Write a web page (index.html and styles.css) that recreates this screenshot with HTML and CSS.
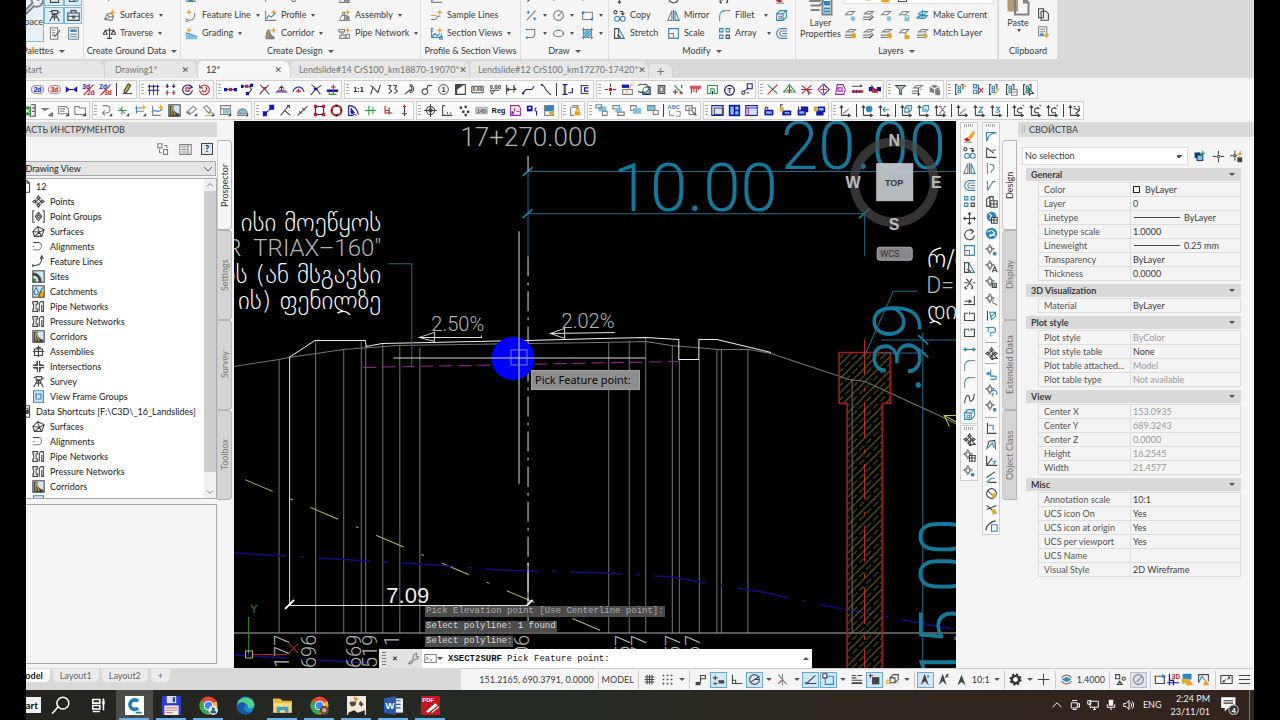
FILE: index.html
```html
<!DOCTYPE html>
<html lang="en">
<head>
<meta charset="utf-8">
<title>Civil 3D</title>
<link rel="stylesheet" href="styles.css">
</head>
<body>
<div class="screen">
<div class="app">

<header class="ribbon">
  <section class="panel palettes">
    <div class="body">
      <button class="big on"><i data-icon="wrench"></i>Toolspace</button>
      <button class="on" aria-label="Sheet"><i data-icon="sheet"></i></button><button class="on" aria-label="Settings"><i data-icon="gearb"></i></button>
      <button class="on" aria-label="Survey"><i data-icon="survey"></i></button><button class="on" aria-label="Toolbox"><i data-icon="case"></i></button>
      <button aria-label="Edit list"><i data-icon="listpen"></i></button><button aria-label="Properties"><i data-icon="bluelist"></i></button>
    </div>
    <h2>Palettes <b class="caret"></b></h2>
  </section>
  <section class="panel ground">
    <div class="body">
      <button><i data-icon="ptstar"></i>Points <b class="caret"></b></button>
      <button><i data-icon="surfstar"></i>Surfaces <b class="caret"></b></button>
      <button><i data-icon="scales"></i>Traverse <b class="caret"></b></button>
    </div>
    <h2>Create Ground Data <b class="caret"></b></h2>
  </section>
  <section class="panel design">
    <div class="body">
      <button><i data-icon="parcel"></i>Parcel <b class="caret"></b></button>
      <button><i data-icon="align"></i>Alignment <b class="caret"></b></button>
      <button><i data-icon="assem"></i>Intersections <b class="caret"></b></button>
      <button><i data-icon="featstar"></i>Feature Line <b class="caret"></b></button>
      <button><i data-icon="profile"></i>Profile <b class="caret"></b></button>
      <button><i data-icon="assem"></i>Assembly <b class="caret"></b></button>
      <button><i data-icon="grading"></i>Grading <b class="caret"></b></button>
      <button><i data-icon="corrstar"></i>Corridor <b class="caret"></b></button>
      <button><i data-icon="pipestar"></i>Pipe Network <b class="caret"></b></button>
    </div>
    <h2>Create Design <b class="caret"></b></h2>
  </section>
  <section class="panel views">
    <div class="body">
      <button><i data-icon="profile"></i>Profile View <b class="caret"></b></button>
      <button><i data-icon="sample"></i>Sample Lines</button>
      <button><i data-icon="section"></i>Section Views <b class="caret"></b></button>
    </div>
    <h2>Profile &amp; Section Views</h2>
  </section>
  <section class="panel draw">
    <div class="body">
      <button><i data-icon="seg"></i><b class="caret"></b></button><button><i data-icon="arc"></i><b class="caret"></b></button><button><i data-icon="arc"></i><b class="caret"></b></button>
      <button><i data-icon="pctline"></i><b class="caret"></b></button><button><i data-icon="circ"></i><b class="caret"></b></button><button><i data-icon="rect"></i><b class="caret"></b></button>
      <button><i data-icon="pline"></i><b class="caret"></b></button><button><i data-icon="ell"></i><b class="caret"></b></button><button><i data-icon="hatch"></i><b class="caret"></b></button>
    </div>
    <h2>Draw <b class="caret"></b></h2>
  </section>
  <section class="panel modify">
    <div class="body">
      <button><i data-icon="move"></i>Move</button><button><i data-icon="rotate"></i>Rotate</button><button><i data-icon="trim"></i>Trim <b class="caret"></b></button><button><i data-icon="erase"></i></button>
      <button><i data-icon="copy"></i>Copy</button><button><i data-icon="mirror"></i>Mirror</button><button><i data-icon="fillet"></i>Fillet <b class="caret far"></b></button><button><i data-icon="cube"></i></button>
      <button><i data-icon="stretch"></i>Stretch</button><button><i data-icon="scale"></i>Scale</button><button><i data-icon="array"></i>Array <b class="caret far"></b></button><button><i data-icon="offset"></i></button>
    </div>
    <h2>Modify <b class="caret"></b></h2>
  </section>
  <section class="panel layers">
    <div class="body">
      <button class="big"><i data-icon="layerprop"></i>Layer<br>Properties</button>
      <div class="combo"><i data-icon="bulb"></i><i data-icon="sun"></i><i data-icon="lock"></i><i data-icon="swatch"></i></div>
      <button><i data-icon="lay1"></i></button><button><i data-icon="lay2"></i></button><button><i data-icon="lay1"></i></button><button><i data-icon="laylock"></i></button><button class="wide"><i data-icon="laycur"></i>Make Current</button>
      <button><i data-icon="layon"></i></button><button><i data-icon="lay2"></i></button><button><i data-icon="layon"></i></button><button><i data-icon="layunl"></i></button><button class="wide"><i data-icon="laymatch"></i>Match Layer</button>
    </div>
    <h2>Layers <b class="caret"></b></h2>
  </section>
  <section class="panel clip">
    <div class="body">
      <button class="big"><i data-icon="paste"></i>Paste<b class="caret"></b></button>
      <button><i data-icon="cutab"></i></button><button><i data-icon="pages"></i></button><button><i data-icon="pastesp"></i></button>
    </div>
    <h2>Clipboard</h2>
  </section>
</header>

<nav class="doctabs">
  <div class="tab start"><button>Start</button></div>
  <div class="tab short"><button>Drawing1*</button><button class="x" aria-label="Close Drawing1">✕</button></div>
  <div class="tab short active"><button>12*</button><button class="x" aria-label="Close 12">✕</button></div>
  <div class="tab"><button>Lendslide#14 CrS100_km18870-19070*</button><button class="x" aria-label="Close #14">✕</button></div>
  <div class="tab"><button>Lendslide#12 CrS100_km17270-17420*</button><button class="x" aria-label="Close #12">✕</button></div>
  <div class="tab plus"><button aria-label="New tab">+</button></div>
</nav>

<div class="rows">
  <div class="row">
    <div class="tools" data-icons="text2 t2d t3d bowtie m3d2d m2d3d | pencil"></div>
    <div class="tools" data-icons="railbr dots4 rotb rotr"></div>
    <div class="tools" data-icons="nodes nodes2 tent base dome tent2 crossg"></div>
    <div class="tools" data-icons="t11 zig waves loop sig one boxc t000 lev dimr seg2 step | ibeam cbox"></div>
    <div class="tools" data-icons="star4 ruler twoc sq plusdots redtri maze tclock bubble"></div>
    <div class="tools" data-icons="xrg tri burst diamond pbox redline redpt"></div>
    <div class="tools" data-icons="funnel layersel cubelock"></div>
    <div class="tools" data-icons="brstar brx bredit brtab brsel"></div>
  </div>
  <div class="row second">
    <div class="tools" data-icons="xls dd frame foldr"></div>
    <div class="tools" data-icons="curve plusg cross2 wave2 road pipe pipe2 table domeb"></div>
    <div class="tools" data-icons="nsline angle slope rbox redring arcbox pluss redl pin"></div>
    <div class="tools" data-icons="target lbrace dots5 t145 treg purple bluesq note"></div>
    <div class="tools" data-icons="foldlock"></div>
    <div class="tools" data-icons="ord1 ord2 ord3 ord4 | abc frames"></div>
    <div class="tools" data-icons="win1 win2 win3 vlock vunl vlock2 vunl2"></div>
    <div class="tools" data-icons="ucs | ucsg ucsb | ucsf ucsf2 ucsx | ucs ucsz ucs3 | ucsr ucsr ucsr | ucsc"></div>
  </div>
</div>

<main class="work">
  <aside class="toolspace">
    <h2 class="title">ОБЛАСТЬ ИНСТРУМЕНТОВ</h2>
    <div class="tstools"><button aria-label="Swap"><i data-icon="tswap"></i></button><button aria-label="Panorama"><i data-icon="tpan"></i></button><button class="help" aria-label="Help">?</button></div>
    <select aria-label="View"><option>Active Drawing View</option></select>
    <div class="treebox">
      <ul class="tree">
        <li class="root"><i data-icon="doc"></i>12</li>
        <li><i data-icon="pt"></i>Points</li>
        <li><i data-icon="ptg"></i>Point Groups</li>
        <li><i data-icon="surf"></i>Surfaces</li>
        <li><i data-icon="alig"></i>Alignments</li>
        <li><i data-icon="feat"></i>Feature Lines</li>
        <li><i data-icon="site"></i>Sites</li>
        <li><i data-icon="catch"></i>Catchments</li>
        <li><i data-icon="pipes"></i>Pipe Networks</li>
        <li><i data-icon="pipes"></i>Pressure Networks</li>
        <li><i data-icon="road"></i>Corridors</li>
        <li><i data-icon="asm"></i>Assemblies</li>
        <li><i data-icon="inter"></i>Intersections</li>
        <li><i data-icon="survey"></i>Survey</li>
        <li><i data-icon="vfg"></i>View Frame Groups</li>
        <li class="root"><i data-icon="dsc"></i>Data Shortcuts [F:\C3D\_16_Landslides]</li>
        <li><i data-icon="surf"></i>Surfaces</li>
        <li><i data-icon="alig"></i>Alignments</li>
        <li><i data-icon="pipes"></i>Pipe Networks</li>
        <li><i data-icon="pipes"></i>Pressure Networks</li>
        <li><i data-icon="road"></i>Corridors</li>
        <li><i data-icon="vfg"></i>View Frame Groups</li>
      </ul>
      <div class="bar"><button aria-label="Scroll up"><i data-icon="up"></i></button><span></span><button aria-label="Scroll down"><i data-icon="down"></i></button></div>
    </div>
    <div class="preview"></div>
  </aside>
  <nav class="vtabs left"><button class="active">Prospector</button><button>Settings</button><button>Survey</button><button>Toolbox</button></nav>

  <section class="canvas">
    <svg class="drawing" viewBox="234 122 722 546" preserveAspectRatio="xMinYMin slice">
      <defs>
        <pattern id="hat" width="14" height="14" patternUnits="userSpaceOnUse">
          <path d="M-1 15L15 -1" stroke="#75701f" stroke-width="1"/>
          <path d="M-1 8L2 5M4 3L8 -1M6 15L9 12M11 10L15 6" stroke="#5f5b1a" stroke-width="1"/>
        </pattern>
      </defs>
      <g fill="none" stroke="#747474">
        <path d="M279 360V633M315.500 342V633M343.500 350V633M361 342V633M365.500 346V633M382.500 344V633M399.500 346V633M419.500 348V633M608 343V633M628.500 341V633M645 339V633M671.500 346V633M678.500 360V633M698.500 360V633M716 350V633M720.500 350V633M747 350V633M851 380V633"/>
        <path d="M234 367L279 360 289 358 343 350 398 346 600 343 645 342 670 346 718 350H748L770 354 848 380 864 382 940 417 956 425"/>
        <path d="M234 633H956" stroke="#b0b0b0"/>
      </g>
      <path d="M289 358L315 341H365L366 347 382 344 527 341 600 339 645 338 678 340V360H698V340H716L770 353" fill="none" stroke="#eee"/>
      <path d="M363 368L678 362" stroke="#a0229c" stroke-dasharray="13 6" />
      <path d="M245 480L615 637" stroke="#b5b552" stroke-dasharray="30 19 3 19"/>
      <path d="M234 553L430 565 497 570 600 573 670 577 760 592 820 605 956 630M234 655L320 660 380 664" fill="none" stroke="#100e80" stroke-dasharray="52 14 4 14" stroke-width="1.500"/>
      <path d="M838 353H889V404H881V670H846V404H838Z" fill="url(#hat)" stroke="#b01818" stroke-width="1.500"/>
      <path d="M863.500 340V668" stroke="#d03a1a" stroke-dasharray="36 12 4 10"/>
      <g fill="none" stroke="#17708c">
        <path d="M527 172.500H956M527 214.500H863M527.500 172V257M863.500 215V257M388 264.500H411.500V368M921.500 333V668M880 340.500H956M880 353.500H925M916 292H892L864 355"/>
        <path d="M522 177L532 168M522 219L532 210M858 219L868 210M917 336L927 345M917 349L927 358" stroke="#1f86a8" stroke-width="1.500"/>
      </g>
      <path d="M527.500 157V172M289.500 358V605M527.500 563V605M289 605.500H527" stroke="#ddd"/>
      <path d="M285 609L294 600M523 609L532 600" stroke="#fff" stroke-width="2"/>
      <path d="M527.500 257V633" stroke="#ddd" stroke-dasharray="20 6 3 6"/>
      <path d="M419 338L434 333V342ZH481V336M550 334L564 329V339ZL614 333" fill="none" stroke="#ddd"/>
      <path d="M956 423L943 416 948 427M943 416H956" fill="none" stroke="#c8c83c"/>
      <g class="dim">
        <text x="612" y="212">10.00</text><text x="780" y="170">20.00</text>
        <text transform="translate(920 393) rotate(-90)">.39</text>
        <text transform="translate(966 683) rotate(-90)">15.00</text>
      </g>
      <g class="stroke">
        <text x="460" y="147" font-size="26">17+270.000</text>
        <text x="381" y="257" font-size="24" text-anchor="end">R &#160;TRIAX–160"</text>
        <text x="925" y="294" font-size="23">D=</text>
        <text x="431" y="332" font-size="20">2.50%</text><text x="561" y="329" font-size="20">2.02%</text>
        <g font-size="20">
          <text transform="translate(289 668) rotate(-90)">177</text><text transform="translate(316 668) rotate(-90)">696</text>
          <text transform="translate(361 668) rotate(-90)">669</text><text transform="translate(377 668) rotate(-90)">519</text>
          <text transform="translate(399 657) rotate(-90)">11</text><text transform="translate(528 657) rotate(-90)">06</text>
          <text transform="translate(629 657) rotate(-90)">57</text><text transform="translate(645 657) rotate(-90)">77</text>
          <text transform="translate(679 657) rotate(-90)">57</text><text transform="translate(699 657) rotate(-90)">67</text>
        </g>
      </g>
      <g class="geo">
        <text x="381" y="232" text-anchor="end">ისი მოეწყოს</text>
        <text x="381" y="284" text-anchor="end">ის (ან მსგავსი</text>
        <text x="381" y="310" text-anchor="end">ის) ფენილზე</text>
        <text x="926" y="268">რ/ბ</text><text x="926" y="320">დი</text>
      </g>
      <text class="arial" x="386" y="603">7.09</text>
      <circle cx="512.500" cy="359" r="21.500" fill="#0000ff"/>
      <path d="M393 358.500H645M518.500 232V484" stroke="#d8d8d8"/>
      <rect x="510.500" y="350.500" width="16" height="15" fill="none" stroke="#7c7ca8"/>
      <path d="M248.500 654V617M251 605L254 609 257 605M254 609V613" fill="none" stroke="#1f8a2a"/>
      <path d="M252 654.500H287M289 644L298 653M298 644L289 653" stroke="#b02030"/>
      <rect x="245.500" y="651" width="7" height="7" fill="none" stroke="#c8b43c"/>
      <circle cx="893" cy="183" r="40" fill="none" stroke="#4a4a4a" stroke-opacity=".7" stroke-width="9"/>
      <rect x="875" y="164" width="37" height="38" fill="#c3c9cc" fill-opacity=".93"/>
      <g class="cube"><text x="893" y="147">N</text><text x="893" y="231">S</text><text x="852" y="189">W</text><text x="935" y="189">E</text><text class="top" x="893" y="187">TOP</text></g>
      <rect x="876" y="248" width="35" height="13" rx="3" fill="#88888c" stroke="#aaa"/>
      <text class="wcs" x="879" y="258">WCS</text>
    </svg>
    <div class="tip">Pick Feature point:</div>
    <div class="cmd">
      <p class="old">Pick Elevation point [Use Centerline point]:</p>
      <p>Select polyline: 1 found</p>
      <p>Select polyline:</p>
      <div class="cmdline"><span class="grip"></span><button aria-label="Close">✕</button><button aria-label="Customize"><i data-icon="spanner"></i></button>
        <label><i data-icon="term"></i><b class="caret"></b><strong>XSECT2SURF</strong><input type="text" value="Pick Feature point:" aria-label="Command"></label><button class="upb" aria-label="History"><b class="caret up"></b></button></div>
    </div>
  </section>

  <div class="vtools">
    <div class="stack">
      <div class="tools v c1" data-icons="erase copy mirror offset array move rotate scale stretch trim extend brk brk2 join fillet fillet spline cube"></div>
      <div class="tools v c1b" data-icons="qsel qtab qdot"></div>
    </div>
    <div class="tools v c2" data-icons="u1 u2 u3 u4 utab globe globe2 qdot qa qlay qfind unote up1 | qsel | uflip qcfg qdot | d1 d2 d3 d4 d5 d6 d7"></div>
  </div>

  <nav class="vtabs right"><button class="active">Design</button><button>Display</button><button>Extended Data</button><button>Object Class</button></nav>
  <aside class="props">
    <h2 class="title"><i></i>СВОЙСТВА</h2>
    <div class="pick"><select aria-label="Selection"><option>No selection</option></select><button aria-label="Toggle pickadd"><i data-icon="addsel"></i></button><button aria-label="Select objects"><i data-icon="pickp"></i></button><button aria-label="Quick select"><i data-icon="quick"></i></button></div>
    <button class="sec">General<b class="caret"></b></button>
    <table>
      <tr><th>Color</th><td><i class="sw"></i>ByLayer</td></tr>
      <tr><th>Layer</th><td>0</td></tr>
      <tr><th>Linetype</th><td><i class="ln"></i>ByLayer</td></tr>
      <tr><th>Linetype scale</th><td>1.0000</td></tr>
      <tr><th>Lineweight</th><td><i class="ln"></i>0.25 mm</td></tr>
      <tr><th>Transparency</th><td>ByLayer</td></tr>
      <tr><th>Thickness</th><td>0.0000</td></tr>
    </table>
    <button class="sec">3D Visualization<b class="caret"></b></button>
    <table><tr><th>Material</th><td>ByLayer</td></tr></table>
    <button class="sec">Plot style<b class="caret"></b></button>
    <table>
      <tr><th>Plot style</th><td class="dis">ByColor</td></tr>
      <tr><th>Plot style table</th><td>None</td></tr>
      <tr><th>Plot table attached...</th><td class="dis">Model</td></tr>
      <tr><th>Plot table type</th><td class="dis">Not available</td></tr>
    </table>
    <button class="sec">View<b class="caret"></b></button>
    <table>
      <tr><th>Center X</th><td class="dis">153.0935</td></tr>
      <tr><th>Center Y</th><td class="dis">689.3243</td></tr>
      <tr><th>Center Z</th><td class="dis">0.0000</td></tr>
      <tr><th>Height</th><td class="dis">16.2545</td></tr>
      <tr><th>Width</th><td class="dis">21.4577</td></tr>
    </table>
    <button class="sec">Misc<b class="caret"></b></button>
    <table>
      <tr><th>Annotation scale</th><td>10:1</td></tr>
      <tr><th>UCS icon On</th><td>Yes</td></tr>
      <tr><th>UCS icon at origin</th><td>Yes</td></tr>
      <tr><th>UCS per viewport</th><td>Yes</td></tr>
      <tr><th>UCS Name</th><td></td></tr>
      <tr><th>Visual Style</th><td>2D Wireframe</td></tr>
    </table>
  </aside>
</main>

<footer class="status">
  <nav class="layouts"><button class="active">Model</button><button>Layout1</button><button>Layout2</button><button>+</button></nav>
  <div class="sbar">
    <span class="coords">151.2165, 690.3791, 0.0000</span><span class="vs"></span>
    <button class="txt">MODEL</button><span class="vs"></span>
    <button><i data-icon="grid"></i></button><button><i data-icon="snap"></i></button><b class="caret"></b><span class="vs"></span>
    <button><i data-icon="infer"></i></button><button class="on"><i data-icon="dyn"></i></button><button><i data-icon="ortho"></i></button><button class="on"><i data-icon="polar"></i></button><b class="caret"></b>
    <button><i data-icon="iso"></i></button><b class="caret"></b><button class="on"><i data-icon="otrack"></i></button><button class="on"><i data-icon="osnap"></i></button><b class="caret"></b>
    <button><i data-icon="lwt"></i></button><button class="on"><i data-icon="cyc"></i></button><button><i data-icon="osn3"></i></button><b class="caret"></b><span class="vs"></span>
    <button class="on"><i data-icon="ann"></i></button><button><i data-icon="ann2"></i></button><button><i data-icon="ann3"></i></button><button class="txt">10:1</button><b class="caret"></b><span class="vs"></span>
    <button><i data-icon="gear"></i></button><b class="caret"></b><button><i data-icon="plus"></i></button><span class="vs"></span>
    <button><i data-icon="geo"></i></button><button class="txt">1.4000</button><span class="vs"></span><button><i data-icon="shapes"></i></button><button class="on grey"><i data-icon="gauge"></i></button><span class="vs"></span>
    <button class="tight"><i data-icon="s1"></i></button><button class="tight"><i data-icon="s2"></i></button><button class="tight"><i data-icon="s3"></i></button><button><i data-icon="s4"></i></button><span class="vs"></span>
    <button><i data-icon="full"></i></button><button><i data-icon="menu"></i></button>
  </div>
</footer>

<div class="taskbar">
  <button class="startb">Start</button>
  <button><i data-icon="search"></i></button><button><i data-icon="tview"></i></button>
  <button class="run cur"><i data-icon="civil"></i></button><button class="run"><i data-icon="floppy"></i></button><button class="run"><i data-icon="chrome"></i></button><button><i data-icon="edge"></i></button><button class="run"><i data-icon="explorer"></i></button><button class="run"><i data-icon="chrome2"></i></button><button class="run"><i data-icon="anime"></i></button><button class="run"><i data-icon="word"></i></button><button class="run"><i data-icon="pdf"></i></button>
  <div class="tray">
    <button><i data-icon="chev"></i></button><button><i data-icon="cam"></i></button><button><i data-icon="net"></i></button><button><i data-icon="mic"></i></button><button><i data-icon="vol"></i></button><span>ENG</span>
    <time>2:24 PM<br>23/11/01</time><button class="note"><i data-icon="notif"></i></button>
  </div>
</div>
</div>
</div>
<script src="icons.js"></script>
</body>
</html>
```
FILE: styles.css
```css
*{box-sizing:border-box}
body{margin:0;background:#000;font:9px/12px Lato,"Noto Sans",sans-serif;color:#3c3c3c}
button,input,select{font:inherit;color:inherit;border:0;background:none;padding:0;margin:0}
h2,p,ul{margin:0;padding:0;font:inherit;list-style:none}
i{font-style:normal;display:inline-flex;flex:none}
i svg{display:block;width:13px;height:13px}
button{display:flex;align-items:center;white-space:nowrap}
.caret{display:inline-block;flex:none;border:3px solid transparent;border-top-color:#555;border-bottom:0;vertical-align:middle}
.caret.up{border-top:0;border-bottom:3px solid #555}
.screen{margin:0 26px;height:100vh;overflow:hidden}
.app{margin-left:-20px;height:100%;display:flex;flex-direction:column;background:#f4f4f4}

.ribbon{display:flex;height:59px;flex:none;overflow:hidden;background:#d9d9d9}
.panel{display:flex;flex-direction:column;justify-content:flex-end;background:#f5f5f5;border-right:1px solid #dcdcdc;flex:none}
.panel .body{display:grid;grid-auto-rows:18px;align-items:center;flex:none}
.panel h2{height:17px;line-height:17px;text-align:center;white-space:nowrap;flex:none}
.panel h2 .caret{margin-left:3px}
.panel button{gap:4px;height:18px}
.panel button .caret{border-width:3px 2px 0;margin-left:1px}
.panel .caret.far{margin-left:6px}
.panel .big{grid-row:1/4;height:54px;flex-direction:column;justify-content:flex-end;padding-bottom:12px;gap:1px;align-items:center;line-height:11px}
.panel .big i svg{width:24px;height:24px}
.palettes{width:78px}
.palettes .body{grid-template-columns:38px 20px 18px}
.palettes .body button{justify-content:center}
.palettes .on{background:#dcebf5;border:1px solid #7db8dc;height:17px}
.palettes .big.on{height:54px;align-self:stretch;align-items:flex-end;background:#e6f1f8}
.palettes h2{padding-right:2px}
.ground{width:97px}
.ground .body{padding-left:19px}
.design{width:240px}
.design .body{padding-left:4px;grid-template-columns:79px 74px 1fr}
.views{width:100px}
.views .body{padding-left:9px}
.draw{width:88px}
.draw .body{padding-left:4px;grid-template-columns:27px 29px 1fr}
.modify{width:187px}
.modify .body{padding-left:4px;grid-template-columns:54px 51px 57px 1fr}
.layers{width:202px}
.layers .body{padding-left:1px;grid-template-columns:47px 18px 18px 18px 18px 1fr}
.layers .big,.clip .big{padding-bottom:3px}
.layers .combo{grid-column:2/7;background:#fff;border:1px solid #ddd;display:flex;gap:4px;height:14px;margin-right:3px;align-items:center}
.clip{width:60px;border-left:1px solid #ddd}
.clip .body{grid-template-columns:38px 1fr;padding-bottom:1px}
.clip .big{padding-bottom:9px}

.doctabs{display:flex;align-items:flex-end;height:19px;flex:none;background:#d9d9d9;color:#757575}
.tab{display:flex;justify-content:space-between;align-items:center;width:179px;height:17px;padding:0 8px 0 8px;background:#e6e6e6;border-right:1px solid #d2d2d2;border-radius:5px 8px 0 0}
.tab.start{width:99px;padding-left:17px}
.tab.short{width:93px}
.tab.short:nth-child(2){padding-left:10px}
.tab.active{background:#f6f6f6;color:#333}
.tab.plus{width:24px;font-size:14px;justify-content:center;height:14px}
.tab .x{font:9px/12px "DejaVu Sans",sans-serif;color:#555}

.rows{display:flex;flex-direction:column;gap:2px;padding:2px 0 1px;flex:none}
.row{display:flex;gap:2px;height:19px}
.row.second{padding-left:9px}
.tools{display:flex;align-items:center;border:1px solid #d0d0d0;background:#fafafa;flex:none}
.tools::before{content:"";width:3px;margin:3px 1px;align-self:stretch;background:repeating-linear-gradient(#aaa 0 1px,#fafafa 1px 3px)}
.tools button{width:17px;justify-content:center}
.tools hr{width:1px;height:13px;border:0;background:#444;margin:0 2px}

.work{display:flex;flex:1;min-height:0}
.toolspace{width:211px;display:flex;flex-direction:column;flex:none}
.title{height:15px;line-height:15px;background:#d9d9d9;margin-top:1px;padding-left:0;flex:none;white-space:nowrap}
.tstools{display:flex;gap:9px;justify-content:flex-end;padding:4px 4px;height:24px;align-items:center}
.tstools .help{width:12px;height:12px;border:1px solid #445;background:#dde6ee;justify-content:center;font-weight:bold;color:#112}
.toolspace select{appearance:none;height:15px;width:210px;flex:none;border:1px solid #aaa;color:#222;text-indent:-11px;padding-left:2px;background:linear-gradient(45deg,transparent 48%,#555 48% 60%,transparent 60%) right 7px center/4px 4px no-repeat,linear-gradient(-45deg,transparent 48%,#555 48% 60%,transparent 60%) right 3px center/4px 4px no-repeat,#e4e4e4}
.treebox{display:flex;height:321px;margin-top:2px;border:1px solid #aaa;border-left:0;background:#fff;flex:none}
.tree{flex:1;overflow:hidden;color:#1a1a1a}
.tree li{display:flex;align-items:center;height:15px;padding-left:26px;gap:5px;white-space:nowrap}
.tree li.root{padding-left:13px;gap:4px}
.bar{width:12px;display:flex;flex-direction:column;background:#f0f0f0}
.bar span{flex:1;background:#cdcdcd;margin-bottom:14px}
.bar button{height:12px;justify-content:center}
.bar i svg{width:8px;height:8px}
.preview{flex:1;margin:5px 0 4px;border:1px solid #aaa;background:#f4f4f4}
.vtabs{width:17px;display:flex;flex-direction:column;flex:none;color:#777}
.vtabs button{writing-mode:vertical-rl;transform:rotate(180deg);height:90px;width:15px;justify-content:center;background:#d4d4d4;border:1px solid #b4b4b4;border-right-color:#ccc;border-radius:4px 0 0 4px}
.vtabs button.active{background:#f6f6f6;color:#333}
.vtabs.left,.vtabs.right{padding-top:19px}
.vtabs.right button{border-radius:0 4px 4px 0}

.canvas{flex:1;position:relative;background:#000;min-width:0;overflow:hidden}
.drawing{display:block;width:100%;height:100%}
.drawing text{font-family:Roboto,"Liberation Sans",sans-serif}
.dim{fill:#147a9c;font-size:67px;font-weight:300}
.stroke{fill:#b4b4b4;font-weight:300}
.drawing .geo text{font-family:"DejaVu Sans",sans-serif;font-size:25px;fill:#fff;font-weight:200}
.drawing .arial{font-family:"Liberation Sans",Arial,sans-serif;font-size:22px;fill:#eee}
.cube text{font-family:"Liberation Sans",sans-serif;font-weight:bold;font-size:16px;fill:#bdbdbd;text-anchor:middle}
.cube .top{font-size:9px;fill:#334}
.drawing .wcs{font-size:9px;fill:#333}
.tip{position:absolute;left:297px;top:249px;height:20px;padding:0 8px 0 3px;background:#8e8e8e;border:1px solid #a4a4a4;color:#0a0a0a;font:11px/18px "Noto Sans",sans-serif}
.cmd{position:absolute;left:145px;bottom:0;width:433px;font-family:"Liberation Mono",monospace;color:#ddd}
.cmd p{width:max-content;margin:0 0 4px 46px;line-height:11px;background:#4c4c4c;padding:0 1px}
.cmd p:last-of-type{margin-bottom:2px}
.cmd p.old{color:#aaa}
.cmdline{display:flex;align-items:center;height:19px;background:#e2e2e2;color:#111}
.cmdline button{width:18px;justify-content:center}
.grip{width:4px;height:13px;margin-left:3px;background:repeating-linear-gradient(#777 0 1px,transparent 1px 3px)}
.cmdline label{flex:1;display:flex;align-items:center;height:19px;background:#fff;padding-left:2px;min-width:0}
.cmdline strong{margin:0 5px 0 5px}
.cmdline input{flex:1;min-width:0}
.cmdline .upb{height:19px;background:#fff;width:12px}

.vtools{display:flex;gap:4px;padding:1px 4px 0;width:46px;flex:none;align-items:flex-start}
.tools.v{flex-direction:column;width:18px}
.tools.v::before{width:10px;height:3px;margin:1px 2px;align-self:center;flex:none;background:repeating-linear-gradient(90deg,#aaa 0 1px,#fafafa 1px 2px)}
.tools.v button{flex:1;width:16px}
.tools.v hr{width:12px;height:1px;margin:2px 0;background:#aaa}
.c1{height:302px}
.c1b{height:56px;margin-top:1px}
.c2{height:413px}

.props{flex:1 0 235px;max-width:235px;padding-right:14px}
.props .title{margin-right:-14px;margin-left:-1px;padding-left:4px}
.title i{width:3px;height:8px;margin-right:4px;border:solid #bbb;border-width:0 1px}
.pick{display:flex;align-items:center;height:20px;margin:9px -6px 2px 3px}
.pick select{appearance:none;width:170px;height:18px;padding-left:2px;border:1px solid #ddd;background:linear-gradient(to bottom right,#555 50%,transparent 50%) right 5px center/3px 3px no-repeat,linear-gradient(to bottom left,#555 50%,transparent 50%) right 8px center/3px 3px no-repeat,#fff;margin-right:3px}
.pick button{width:19px;justify-content:center}
.sec{width:215px;height:13px;margin:0 0 1px 7px;padding:0 6px 0 5px;justify-content:space-between;background:#d9d9d9;font-weight:bold}
table+.sec{margin-top:3px}
.props table{width:203px;margin-left:19px;border-collapse:collapse;table-layout:fixed}
.props tr{height:14px}
.props th,.props td{padding:0 0 0 2px;font-weight:normal;text-align:left;border:1px solid #dedede;line-height:12px;white-space:nowrap}
.props th{width:92px;padding-left:5px;color:#555}
.props .dis{color:#999}
.sw{width:7px;height:7px;border:1px solid #222;background:#fff;margin-right:5px}
.ln{width:46px;height:1px;background:#444;margin:0 4px 3px 1px}

.status{display:flex;justify-content:space-between;height:22px;flex:none;background:#d9d9d9}
.layouts{display:flex;align-items:flex-start;padding:1px 0 0 4px;color:#666}
.layouts button{height:13px;padding:0 7px;background:#ececec;border-radius:0 0 5px 5px;margin-right:3px}
.layouts .active{font-weight:bold;color:#222;background:#fafafa}
.sbar{display:flex;align-items:center;background:#f4f4f4;border-top:1px solid #ccc;padding-left:18px}
.sbar button{width:17px;height:16px;justify-content:center;margin-right:1px}
.sbar button.txt{width:auto;padding:0 1px}
.sbar button.tight{width:13px}
.sbar .on{background:#d3e6f5;border:1px solid #6aa6d6}
.sbar .on.grey{background:#dde3ea;border-color:#bbc}
.sbar>.caret{margin:0 2px}
.vs{width:1px;height:18px;background:#ccc;margin:0 2px}
.coords{padding-right:2px}

.taskbar{display:flex;height:30px;flex:none;align-items:stretch;background:linear-gradient(90deg,#25231f,#252b24 45%,#2c2821 60%,#33231d);color:#eee}
.taskbar button{width:37px;justify-content:center}
.taskbar i svg{width:19px;height:19px}
.taskbar .startb{width:35px;align-self:center;height:16px;background:#f0f0f0;color:#111;font-weight:bold;font-size:10px;justify-content:flex-end;padding-right:3px;margin-right:1px}
.run{position:relative}
.run::after{content:"";position:absolute;left:3px;right:4px;bottom:0;height:2px;background:#6ab0e8}
.taskbar .cur{background:#4b4b47}
.tray{margin-left:auto;display:flex;align-items:center;gap:0;padding-right:4px}
.tray button{width:18px}
.taskbar .tray i svg{width:12px;height:12px}
.tray span{margin:0 9px 0 5px}
.tray time{line-height:13px;text-align:right}
.tray .note{width:40px;border-right:1px solid #777;height:30px}
.taskbar .tray .note i svg{width:19px;height:19px}
```
FILE: icons.js
```js
// Icon shapes on a 16-unit grid: colour letter, optional * for fill, then path data; ';' separates layers.
const C={k:'#444',g:'#808080',b:'#2f86c0',n:'#1616b4',r:'#c8202f',o:'#f0a020',y:'#d8b030',e:'#2a9a3a',c:'#7cc4e0',p:'#a020b8',w:'#fff',l:'#cfe4f2',t:'#b09a78',d:'#0c3c78'};
const STAR='o*M12 0L13 3 16 4 13 5 12 8 11 5 8 4 11 3Z';
const AX='kM3 14V3M1 5L3 2 5 5M3 14H13M11 12L14 14 11 16';
const LAY='gM3 6L7 3H14L10 6ZM3 9L2 10H9L13 7M3 12L2 13H9L13 10';
const SH='gM2 7L6 3H13L9 7Z';
const PT='kM8 1L10 4H6ZM8 15L10 12H6ZM1 8L4 6V10ZM15 8L12 6V10ZM8 5L11 8 8 11 5 8Z';
const PL='gM6 1L8 4H4ZM6 12L8 9H4ZM1 6L4 5V8ZM11 6L8 5V8Z';
const BR='kM4 2H2V14H4M9 2H11V8;bM5 4H8V7H5ZM5 9H8V12H5Z';
const RING=(a)=>`<circle cx="8" cy="8" r="7.5" fill="#e94335"/><path d="M8 8L1.500 4A7.500 7.500 0 0 0 8 15.500L11 10Z" fill="#34a853"/><path d="M8 8L14.600 4.500A7.500 7.500 0 0 1 8 15.500L11 10Z" fill="#fbbc05"/><circle cx="8" cy="8" r="3.600" fill="#4285f4" stroke="#fff"/>${a}`;
const T=(s,c,x,z,y)=>`<text x="${x||8}" y="${y||11}" font-size="${z||9}" font-weight="bold" text-anchor="middle" fill="${c}" font-family="Liberation Sans">${s}</text>`;
const I={
wrench:'gM3 14L9 8A4 4 0 0 1 13 2L11 5 13 6 15 4A4 4 0 0 1 10 10L5 15Z',
sheet:'kM3 2H13V14H3ZM5 5H11M5 8H11',gearb:'kM3 2H10V13H3Z;bM11 7A3 3 0 1 0 11 13A3 3 0 1 0 11 7',
survey:'kM5 2H12V6H5ZM8 6V14M7 6L2 15M9 6L14 15M2 3H5M12 4H15M5 10H11',case:'kM1 5H15V14H1ZM5 5V2H11V5M1 9H15M7 8V11H9V8',
listpen:'gM3 1H12V15H3ZM5 4H9M5 7H9M5 10H9;kM8 12L15 4',bluelist:'gM2 1H14V15H2Z;b*M4 3H12V6H4Z;bM4 9H12M4 12H12',
ptstar:'kM3 8H11M7 4V12;'+STAR,surfstar:'gM2 13L5 6 10 5 13 9 11 14ZM5 6L8 10 13 9M8 10L2 13;'+STAR,
scales:'kM8 1V14M5 14H11M2 4H14M0 9L3 4 5 9ZM10 9L13 4 16 9Z',parcel:'gM2 3H12V13H2Z;b*M4 8H10V13H4Z',align:'b M2 13A8 8 0 0 1 13 5;'+STAR,
assem:'gM1 14H15M2 12L5 8H11L14 12M6 8V4H8V14;g*M9 9H14V13H9Z;'+STAR,featstar:'gM3 14C12 14 12 10 12 5M1 12L4 14 1 16;'+'o*M5 0L6 3 9 4 6 5 5 8 4 5 1 4 4 3Z',
profile:'gM2 2V14H15;bM3 12L6 8 9 10 14 5;'+STAR,grading:'c*M1 8L15 13V15H1Z;bM1 7L15 12;'+'o*M5 0L6 3 9 4 6 5 5 8 4 5 1 4 4 3Z',
corrstar:'g*M2 15C2 9 2 6 5 3L8 3C7 8 9 10 13 12V15Z;yM5 14C4 9 5 6 7 4;'+STAR,pipestar:'gM1 3H8V6H6V10H9V14H2V11H4V6H1Z;gM10 9H14V14H10Z;'+STAR,
sample:'gM1 13H5M5 13A4 4 0 0 0 9 9H13;oM1 8L8 8;'+STAR,section:'bM2 3V13H14V8M2 13L6 8 9 11 12 8;bM1 2H4M1 5H4M12 12H15V15H12Z;'+STAR,
seg:'kM3 13L13 3',arc:'bM2 12A9 9 0 0 1 13 6',pctline:'gM2 14L13 2;bM4 2V6M2 4H6M12 10V14M10 12H14',
circ:'gM8 2A6 6 0 1 0 8 14A6 6 0 1 0 8 2M8 8L13 3;b*M7 7H9V9H7Z',rect:'gM2 4H14V13H2Z;b*M1 3H4V6H1ZM12 11H15V14H12Z',
pline:'gM2 3H12V9A4 4 0 0 1 8 13H3;b*M1 2H3V4H1ZM1 12H4V14H1Z',ell:'gM8 4A6 4 0 1 0 8 12A6 4 0 1 0 8 4;b*M7 3H9V5H7ZM13 7H15V9H13Z',
hatch:'gM1 3H15M1 13H15M3 1V15M13 1V15;c*M4 4H12V12H4Z;bM4 8L8 4M4 12L12 4M8 12L12 8',
move:'kM8 1V15M1 8H15M6 3L8 1 10 3M6 13L8 15 10 13M3 6L1 8 3 10M13 6L15 8 13 10',rotate:'kM12 4A6 6 0 1 0 14 9M9 1L13 4 10 7',
trim:'kM4 2L12 12M11 2L5 12M2 7H6M12 7H15;k*M3 11A2 2 0 1 0 5 15ZM11 11A2 2 0 1 1 10 15Z',erase:'o*M6 9L13 1 15 4 9 12Z;r*M1 12L5 9 9 13 5 14Z;gM1 15H11',
copy:'kM3 2A2 2 0 1 0 3 6A2 2 0 1 0 3 2M8 3H12V7M10 5L12 7 14 5;bM5 9A3 3 0 1 0 5 15A3 3 0 1 0 5 9M12 9A3 3 0 1 0 12 15A3 3 0 1 0 12 9',
mirror:'gM6 2V14H1Z;bM10 2V14H15ZM8 1V15',fillet:'gM2 15V8;bM2 8A7 7 0 0 1 9 2;gM9 2H15',cube:'bM2 6H10V14H2ZM2 6L6 2H14V10L10 14M10 6L14 2;gM5 9H8V12H5Z',
stretch:'kM2 2H7V14H2Z;bM7 2L14 14H7;kM5 10L10 13',scale:'bM6 2H14V14H6M2 2H14V14H2Z;gM2 8H8V14H2Z',
array:'bM2 2H6V6H2ZM10 2H14V6H10ZM2 10H6V14H2Z;kM10 10H14V14H10Z',offset:'bM15 2H8A6 6 0 0 0 8 14H15;gM15 5H9A3 3 0 0 0 9 11H15;bM9 8H15',
layerprop:'gM1 6L5 2H11L7 6ZM1 9H7L10 6M1 12H7;gM9 4H15V15H9Z;b*M10 6H14V9H10Z;bM10 11H14M10 13H14',
bulb:'g*M8 3A4 4 0 1 0 8 11Z',sun:'o*M8 4A4 4 0 1 0 8 12A4 4 0 1 0 8 4',lock:'o*M3 6H13V14H3Z',swatch:'kM3 3H13V13H3Z',
lay1:SH+';c*M11 9A3 3 0 1 0 11 15A3 3 0 1 0 11 9',lay2:LAY+';kM9 14L14 9',laylock:SH+';c*M8 10H14V15H8Z;cM9 10V8H13V10',laycur:'c*M1 11L5 8H14L10 12Z;bM3 6L7 3H14L10 7ZM1 11L5 8H14L10 12ZM8 1V7',
layon:LAY+';o*M12 8A3 3 0 1 0 12 14A3 3 0 1 0 12 8',layunl:SH+';o*M8 10H14V15H8Z;oM9 10V8H12',laymatch:LAY+';y*M9 11L12 8 15 11 12 15Z',
paste:'t*M1 0H8V13H1Z;gM6 4H12L15 7V15H6ZM12 4V7H15',cutab:T('ab','#333'),pages:'kM2 1H8V12H2ZM5 4H11L14 7V15H5Z',pastesp:'gM2 1H12V12H2ZM4 4H10M4 7H10;b*M4 9H8V12H4Z;y*M9 11L12 8 15 11 12 15Z',
text2:'kM2 8H12',t2d:'<rect x="0.500" y="3" width="15" height="10" rx="5" fill="#dfe4f4" stroke="#778"/>'+T('2d','#1616b4',8,8),t3d:'<rect x="0.500" y="3" width="15" height="10" rx="5" fill="#f6dfe0" stroke="#877"/>'+T('3d','#c8202f',8,8),
bowtie:'n*M1 4L6 8 1 12ZM15 4L10 8 15 12Z;nM3 8H13',m3d2d:T('3d','#1616b4',5,8,7)+T('2d','#c8202f',11,8,15)+'<path d="M2 15L14 2" stroke="#c8202f" stroke-width="1.500"/>',m2d3d:T('2d','#1616b4',5,8,7)+T('3d','#c8202f',11,8,15)+'<path d="M2 15L14 2" stroke="#c8202f" stroke-width="1.500"/>',
pencil:'kM2 13H14;y*M4 9L9 1 12 3 7 11 4 12Z;kM4 9L9 1 12 3 7 11 4 12Z',railbr:'rM3 7V15M8 7V15M13 7V15;nM1 4H15M3 2V7M8 2V7M13 2V7M1 9H15',dots4:'nM4 1V6M12 1V6M2 4H6M10 4H14;rM4 9V15M12 9V15M2 12H6M10 12H14',
rotb:'nM13 5A6 6 0 1 0 14 9M10 2L14 5 10 7;rM6 6H10V10H6Z',rotr:'rM3 5A6 6 0 1 1 2 9M5 9A3 3 0 1 0 9 5M2 2V6H6',nodes:'kM1 8H15;r*M6 6H10V10H6Z;n*M0 6H4V10H0ZM12 6H16V10H12Z',
nodes2:'kM1 4H10L13 8 9 13;r*M5 2H9V6H5Z;n*M0 2H3V6H0ZM11 1H15V5H11ZM6 11H10V15H6Z',tent:'kM2 14L8 7 14 14M3 2C6 8 10 8 13 2;r*M6 5H10V8H6Z',base:'nM1 11H15;rM3 9H13;kM8 3V9M5 7L8 4 11 7',
dome:'nM1 11C4 3 12 3 15 11;rM5 10H11M8 7V12',tent2:'kM2 15L8 8 15 3M3 2L9 7 14 14;n*M6 6H10V9H6Z',crossg:'eM4 8V14H13;n*M1 8H15V11H1Z;rM9 2V14M6 5H12',
t11:T('1:1','#222',8,9),zig:'kM2 14L5 5 11 12 14 2M2 3L6 6',waves:'kM2 3H6L4 7 7 10 3 13M9 3H13L11 7 14 10 10 13',loop:'kM8 4A3 3 0 1 1 8 10M2 14L9 8M8 2A5 5 0 1 1 8 12',sig:'kM6 7A3 3 0 1 0 6 14A3 3 0 1 0 6 7M8 8L10 3H15',
one:'<circle cx="8" cy="8" r="6" fill="none" stroke="#222"/>'+T('1','#222',8,8),boxc:'kM2 2H14V14H2Z;k*M2 2H12L4 8V14H2Z',t000:'<path d="M1 4H15V12H1Z" fill="none" stroke="#222"/>'+T('0.00','#222',8,6,10),lev:T('0.00','#222',9,7,7)+'<path d="M3 9H14M3 9L5 14 8 9" stroke="#222" fill="none"/>',
dimr:'kM2 2V14M2 8H14M11 5L14 8M11 2V12M5 6L2 8 5 10',seg2:'nM1 12L5 8H12L15 4;k*M0 11H3V14H0Z',step:'kM2 2L6 4 9 9 14 14H15M2 2H5',ibeam:'nM2 2H8M5 2V14M2 14H8;kM4 2V14;nM9 12H14V6',cbox:'kM13 3H4V13H13;nM13 6H8V10H13',
star4:'kM8 1V5M8 11V15M1 8H5M11 8H15;r*M6 6H10V10H6Z',ruler:'n*M1 2H10V6H1Z;gM2 8H14V14H2Z;oM14 1L6 12',twoc:'kM6 2A5 5 0 1 0 6 11A5 5 0 1 0 6 2;nM10 5H15V14H6V10;eM10 5A4 4 0 1 0 10 13A4 4 0 1 0 10 5',
sq:'kM4 3H12V13H4Z;kM6 5H10V11H6Z',plusdots:'eM3 3L13 13;kM4 8V14M1 11H7M12 2V6;rM11 10V14M9 12H13',redtri:'rM1 4H15M1 6H15M3 6V13M6 6V11M9 6V12M12 6V9',maze:'eM2 14V3H14V13H10V7H6V13H2;nM8 10V14',
tclock:'<circle cx="8" cy="9" r="6" fill="none" stroke="#226" stroke-width="1.500"/>'+T('T','#226',8,9,12),bubble:'kM2 12A2 2 0 1 0 6 12A2 2 0 1 0 2 12M5 10L11 6;nM9 1H15V7H9Z;kM8 12H11',
xrg:'eM2 2L14 13;rM14 2L2 14',tri:'eM8 2L1 11H15Z;rM8 4V13M5 9H11',burst:'rM2 3L14 13M14 3L2 13M1 8H15;kM9 8L11 15',diamond:'nM8 1L15 8 8 15;pM8 1L1 8 8 15;rM8 3V13M4 8H12',pbox:'pM4 2H11L14 8 12 14H2ZM5 6H10V10H5Z',
redline:'kM1 4H14M11 2L14 4;r*M1 9H15V12H1Z;nM3 9V12M7 9V12M11 9V12',redpt:'n*M1 5H6V10H1ZM11 5H16V10H11Z;r*M5 7H11V12H5Z;kM4 3L12 12',
funnel:'kM2 3H14L9 8V14L7 13V8Z;c*M4 4H12L8 8Z',layersel:LAY+';w*M9 6V15L11 13 13 15 14 13 12 12H15Z;kM9 6V15L11 13',cubelock:'g*M2 4L8 2 14 4V10L8 13 2 11Z;g*M9 9H15V15H9Z;wM2 4L8 7 14 4M8 7V13',
brstar:BR+';'+STAR,brx:'bM3 2H7V6H3ZM3 9H7V13H3Z;kM9 2V14;rM10 6L15 12M15 6L10 12',bredit:BR+';oM14 7L8 14',brtab:BR+';gM8 8H15V15H8ZM8 11H15',brsel:BR+';eM6 3V13;kM9 7V15L11 13H14Z',
xls:'e*M1 3H10V14H1Z;kM10 1H15V15H8M11 5H15M11 9H15;wM3 6L8 11M8 6L3 11',dd:'g*M1 5H12L6 9Z;kM11 14L15 11V15Z',frame:'gM2 3H11L14 6V12H2ZM4 6H10M4 9H9;k*M10 15L15 11V15Z',foldr:'gM1 3H6L7 5H14V13H1Z;k*M10 15L15 11V15Z',
curve:'gM3 2H8A4 4 0 0 1 8 11H3M3 11L6 8M3 11L6 14;k*M11 15L15 11V15Z',plusg:'eM6 3V13M1 8H12;gM3 5L10 12;k*M11 15L15 11V15Z',cross2:'gM1 5H10M3 9H12;bM3 2V12;'+STAR+';k*M11 15L15 11V15Z',wave2:'bM1 10C5 4 8 14 14 6;gM2 14H12M2 2V14;'+STAR,
road:'l*M1 1H15V15H1Z;k*M2 15V2H7C6 7 9 11 14 12V15Z;yM5 14C4 9 4 6 5 3M9 14C7 9 6 6 6 3;kM1 1H15V15H1Z',pipe:'gM2 10L10 3 14 6 6 13Z;g*M2 10L6 9 6 13Z;k*M11 15L15 11V15Z',pipe2:'gM2 4L6 2 11 8 8 11ZM8 11H14;yM4 14H12;k*M11 15L15 11V15Z',
table:'gM2 2H14V13H2ZM2 6H14M6 6V13;c*M7 7H13V12H7Z;k*M11 15L15 11V15Z',domeb:'c*M2 12A6 6 0 0 1 14 12Z;gM2 12A6 6 0 0 1 14 12ZM1 14H11;k*M11 15L15 11V15Z',
nsline:'nM3 13L12 4;n*M9 1H15V7H9ZM1 9H6V15H1Z',angle:'kM2 14L7 8 14 14M7 8L12 2;kM10 2H13V5',slope:'kM2 14L14 3M4 9L7 12M8 5L11 8',rbox:'nM3 3H13V13H3Z;r*M1 1H5V5H1ZM11 1H15V5H11ZM1 11H5V15H1ZM11 11H15V15H11Z;w*M5 5H11V11H5Z',
redring:'<circle cx="8" cy="8" r="6" fill="none" stroke="#c8202f" stroke-width="2.500"/><path d="M8 1V3M8 13V15M1 8H3M13 8H15" stroke="#111" stroke-width="2"/>',arcbox:'nM2 2V14H8M2 2C9 2 13 7 14 13M5 5V11L12 14;n*M5 5L10 11H5Z',pluss:'eM6 2V14M1 8H15M11 4V12',redl:'rM5 2V11H14M5 8H10;kM10 4V13',pin:'rM8 1V6M6 3H10;nM8 6V12;kM5 12H11M8 10V15',
target:'kM8 3A5 5 0 1 0 8 13A5 5 0 1 0 8 3M8 0V16M0 8H16M8 6A2 2 0 1 0 8 10A2 2 0 1 0 8 6',lbrace:'kM2 2V14H14M5 2H2M8 10V12M12 10V12',dots5:'k*M2 3H5V6H2ZM8 2H11V5H8ZM5 8H8V11H5ZM11 8H14V11H11ZM8 12H11V15H8Z',t145:'<path d="M1 4H15V12H1Z" fill="#ccc" stroke="#999"/>'+T('145','#555',8,7),treg:T('Reg','#111',8,9),
purple:'pM2 2H12L14 5V14H2Z;p*M3 9H6V13H3Z;rM7 5V9;pM9 9H13',bluesq:'n*M1 2H8V9H1Z;nM13 5A2 2 0 1 0 13 9V14;w*M3 4H6V6H3Z',note:'b*M2 2H13V9H2Z;gM2 2H13V14H2Z;y*M7 10L12 8 14 12 9 15Z',foldlock:'gM2 4H9L12 7M2 4V14H6;gM4 2H11V6;o*M7 9H14V14H7Z;oM9 9V6H12V9',
ord1:'c*M4 3H14V9H4Z;gM1 1H8V5H1ZM9 9H15V14H9Z',ord2:'gM1 2H9V6H1ZM7 10H15V14H7Z;c*M4 5H12V10H4Z',ord3:'gM2 2H9V8H2Z;c*M5 5H15V12H5Z',ord4:'c*M2 2H11V8H2Z;gM2 2H11V8H2ZM9 8H15V13H9Z',abc:T('ABC','#2f86c0',7,7,6)+'<path d="M2 8V14H8M10 9H15V15H10" fill="none" stroke="#777"/>',frames:'gM1 2H9V8H1ZM5 5H13V13H5Z;kM9 9L14 14',
win1:'nM1 2H15V14H1Z;l*M4 5H14V13H4Z;kM4 5H14V13H4Z',win2:'n*M1 1H15V15H1Z;c*M3 3H7V13H3ZM9 3H13V7H9ZM9 9H13V13H9Z',win3:'nM1 2H15V14H1ZM1 5H15;l*M5 6H14V13H5Z;pM4 5V14',
vlock:'n*M3 7H14V14H3Z;c*M5 9H12V12H5Z;kM4 7V4H7V7',vunl:'n*M4 8H15V14H4Z;y*M1 4H6V9H1Z;c*M7 10H13V12H7Z;kM2 4V1H5',vlock2:'n*M6 3H15V10H6ZM2 7H12V14H2Z;c*M4 9H10V12H4Z;kM3 7V3',vunl2:'n*M6 3H15V10H6ZM4 8H13V14H4Z;y*M1 3H6V9H1Z;c*M7 5H13V8H7Z',
ucs:AX+';gM5 12L12 6',ucsg:AX+';b*M10 2A4 4 0 1 0 10 10A4 4 0 1 0 10 2',ucsb:AX+';bM14 7H6M9 4L6 7 9 10',ucsf:AX+';bM6 5H11V10H6ZM6 5L9 2H14V7L11 10',ucsf2:AX+';c*M6 5H12V10H6Z;bM6 5L9 2H14V7L12 10',ucsx:AX+';gM6 3H9M12 3H15M6 11H9M12 11H15M8 4L13 10M13 4L8 10',ucsz:AX+';bM7 4H12L7 10H12',ucs3:AX+';bM7 4H12L9 7C14 7 12 11 7 10',ucsr:AX+';kM12 6A3 3 0 1 0 12 10M10 4L13 6;bM13 1L15 3',ucsc:AX+';kM7 3H9M12 3H14M7 5L14 8 9 12M14 4V7',
tswap:'gM1 1H6V6H1ZM8 8H13V14H8ZM3 8V12H6M9 3H12V6',tpan:'gM1 2H15V14H1ZM11 2V14M3 5H9M3 8H9M3 11H9',doc:'kM3 1H10L13 4V15H3ZM10 1V4H13',pt:PT,ptg:'kM3 1H1V15H3M13 1H15V15H13M8 3L12 8 8 13 4 8ZM8 6L10 8 8 10 6 8Z',surf:'kM1 8L7 2 15 6 12 14H3ZM7 2L9 9 15 6M9 9L3 14M9 9L12 14M1 8L9 9',alig:'kM1 3H9;gM9 3A5 5 0 0 1 9 12H1M1 8H3',feat:'kM1 13C10 13 12 10 12 3M10 5L12 1 14 5M1 11V15',
site:'l*M1 1H15V15H1Z;k*M1 3C7 3 12 8 12 15H8C8 9 6 7 1 7Z;e*M1 10L5 11V15H1Z;kM1 1H15V15H1Z',catch:'l*M1 1H15V15H1Z;o*M9 8H15V15H7Z;bM5 3C2 8 2 12 5 12S9 8 5 3;kM1 1H15V15H1ZM8 14L13 3',pipes:'kM1 2H7V5H5V11H7V14H1V11H2V5H1ZM9 14V6A4 4 0 0 1 11 2H14V14H12V6',asm:'kM8 1V15M1 8H15M3 8V5H13V8M3 8V13H13V8M6 5V3H10V5',inter:'k*M6 1H10V5L15 6V10H11L10 15H6V11L1 10V6L5 5Z;wM8 1V15M1 8H15',vfg:'l*M2 2H14V14H2Z;bM1 1H15M1 15H15M2 1V15M14 1V15M5 5H11V11H5Z',dsc:'kM5 1H13V15H3M6 4H11V9H8;k*M7 6H12V11H7Z',up:'kM2 11L8 5 14 11',down:'kM2 5L8 11 14 5',
spanner:'gM2 14L8 8A4 4 0 0 1 12 2L11 5 14 6A4 4 0 0 1 10 9L4 15Z',term:'gM1 3H15V13H1ZM3 6L5 8 3 10M7 10H10',extend:'kM2 9H10M7 7L10 9 7 11M1 13H14M14 2V14',brk:'kM9 4H14V13H2V4H6;bM8 2V6',brk2:'kM6 4H2V13H14V4H10;bM7 3V6M10 3V6',join:'b*M2 5L6 8 2 11ZM14 5L10 8 14 11Z;bM0 8H16',spline:'kM2 14C3 2 8 2 8 8S13 12 14 2',
qsel:PT+';w*M9 8V16L11 14 15 14Z;kM9 8V16L11 14 15 14Z',qtab:PL+';kM8 8H15V15H8ZM8 11H15M11 8V15',qdot:PL+';b*M10 10H14V14H10Z',qa:PL+';'+'kM9 15L12 8 15 15M10 13H14',qlay:PL+';kM9 9H14V14H9ZM7 11H12V15',qfind:PL+';gM11 9A2 2 0 1 0 12 13L15 15',qcfg:PL+';bM9 9A3 3 0 1 1 14 13M11 12H9V15',
u1:'bM2 14V3H14M2 3M3 13C3 8 7 4 12 4',u2:'kM2 2V14H14M2 2L11 9;bM7 7L13 4',u3:'gM3 1V15;bM6 3H9A4 4 0 0 1 9 10L7 13',u4:'gM3 2V14;bM3 14L10 3H13',utab:'kM6 2L2 5V14H6V2H10V6;kM7 7H15V15H7ZM7 11H15M11 7V15',globe:'b*M8 1A6 6 0 1 0 8 13A6 6 0 1 0 8 1;wM5 3L8 6 6 10;w*M8 8H15V15H8Z;kM8 8H15V15H8ZM8 11H15M11 8V15',globe2:'b*M8 1A7 7 0 1 0 8 15A7 7 0 1 0 8 1;wM3 6L8 4 12 7 6 12M5 10H13',unote:'kM3 2V14;bM6 4H13V9L8 13ZM13 4L6 11',up1:'bM1 3H10A3 3 0 0 1 10 9H7V14M4 3V9',uflip:'bM7 2V10H12A2 2 0 0 1 12 14H7M1 7H6M3 5L6 7 3 9',
d1:'kM3 1V14H14;bM4 4H10V10',d2:'kM2 14L5 4 12 3 13 14;bM4 12L9 6 11 12',d3:'kM2 2V14H15M2 14L9 5;bM9 9H13L10 13',d4:'kM2 8L12 1M4 14H14;bM2 14L8 9H12',d5:'kM8 2A6 6 0 1 0 8 14A6 6 0 1 0 8 2M3 4L12 13;y*M8 9L12 7 14 11 10 15Z',d6:'kM2 3L14 13M2 8L14 3;y*M8 9L12 7 14 11 10 15Z',d7:'kM1 14C2 7 6 4 13 2;bM8 7H15V15H8Z',
addsel:'d*M2 3H9V10H2Z;c*M5 6H12V13H5Z;dM5 6H12V13H5Z;eM12 1V7M9 4H15',pickp:'kM8 1V5M8 11V15M1 8H5M11 8H15M8 6L10 8 8 10 6 8Z',quick:'kM6 1V4M6 10V13M0 7H3M6 5L8 7 6 9 4 7Z;o*M14 0L9 6H12L10 9 16 4H13Z;k*M9 9H15V15H9Z',
grid:'kM2 5H14M2 8H14M2 11H14M5 2V14M8 2V14M11 2V14',snap:'k*M2 2H4V4H2ZM7 2H9V4H7ZM12 2H14V4H12ZM2 7H4V9H2ZM7 7H9V9H7ZM12 7H14V9H12ZM2 12H4V14H2ZM7 12H9V14H7ZM12 12H14V14H12Z',infer:'kM8 3H14V7H8ZM8 7V12;k*M2 11H8V15H2Z',dyn:'kM4 3V9M1 6H7;k*M8 9H15V13H8ZM2 12H6V14H2Z',ortho:'kM3 2V13H15M3 9H7V13',polar:'kM8 2A6 6 0 1 0 8 14A6 6 0 1 0 8 2M4 11L14 4M8 8H14',iso:'gM3 2L13 14M8 1V15;rM3 13L7 9',otrack:'kM14 3L3 13H15;b*M1 11H4V14H1Z',osnap:'bM4 4H14V14H4Z;w*M1 1H6V6H1Z;kM1 1H6V6H1Z',
lwt:'kM2 3H7M9 3H15M2 6H8M2 9H15M2 12H15M2 13H15',cyc:'k*M5 5H14V14H5Z;kM3 1V6M1 3H6',osn3:'kM5 6H11V12H5ZM5 6L9 2H15V8L11 12;oM1 9H5V13H1Z',ann:'k*M7 1L12 15 7 10 2 15Z;b*M12 2A2 2 0 1 0 12 6Z',ann2:'k*M7 1L12 15 7 10 2 15Z;kM11 2L14 5M14 1L10 6',ann3:'k*M8 2L13 15 8 11 3 15Z',gear:'<circle cx="8" cy="8" r="4.500" fill="none" stroke="#333" stroke-width="3"/><circle cx="8" cy="8" r="6.500" fill="none" stroke="#333" stroke-width="2" stroke-dasharray="2.600 2.500"/>',plus:'kM8 1V15M1 8H15',
geo:'b*M2 8L8 5 14 8 8 11Z;gM2 6A7 7 0 0 1 14 6M2 10A7 7 0 0 0 14 10',shapes:'kM2 2H7V7H2ZM12 5A2 2 0 1 0 12 9A2 2 0 1 0 12 5M7 10L10 14H4Z',gauge:'gM8 2A6 6 0 1 0 8 14A6 6 0 1 0 8 2M6 11L12 4',s1:'oM1 4H5;kM3 3V13H14V4H5;b*M11 1L16 4 12 7Z',s2:T('3D','#c8202f',11,8,7)+'<path d="M3 1V15M0 12H15M3 9H8V15" fill="none" stroke="#1616b4" stroke-width="1.500"/>',s3:'b*M2 1H13V8H2Z;y*M1 7H9V13H1Z;o*M10 7L15 15H6Z',s4:'kM2 12V2H14V10;bM2 12L6 4 10 9;o*M11 8L15 15H7Z',full:'kM1 3H15V13H1ZM9 8L12 5M7 8L4 11M10 5H12V7M4 9V11H6',menu:'kM1 3H15M1 8H15M1 13H15',
search:'wM10 1A5 5 0 1 0 10 11A5 5 0 1 0 10 1M6 9L1 15',tview:'wM4 3H10V6H4ZM4 8H10V11H4ZM13 2V12M4 13H10;w*M12 4H14V7H12Z',
civil:'<path d="M0 0H16V16H0Z" fill="#fff"/><path d="M11 4.500A4 4 0 1 0 11 10" fill="none" stroke="#1f7fae" stroke-width="3"/><path d="M9 14H14" stroke="#1f7fae" stroke-width="1.500"/>',
floppy:'<path d="M0 0H16V16H0Z" fill="#2c3ed0"/><path d="M4 0H12V6H4Z" fill="#dde"/><path d="M9 1H11V5H9Z" fill="#24a"/><path d="M2 8H14V16H2Z" fill="#f6e8ec"/><path d="M3 10H13M3 12H13M3 14H9" stroke="#c88"/>',
chrome:RING('<circle cx="12" cy="12" r="4" fill="#dfe6f2"/><circle cx="12" cy="11" r="1.300" fill="#357"/><path d="M9.500 14.500A2.500 2.500 0 0 1 14.500 14.500Z" fill="#357"/>'),chrome2:RING('<circle cx="12" cy="12" r="3.800" fill="#6b4a38"/><circle cx="12" cy="12" r="1.800" fill="#d3a888"/>'),
edge:'<circle cx="8" cy="8" r="7.500" fill="#1b84d0"/><path d="M1 7C2 0 14-1 15.500 7C15.500 10 12 11 10 10C11 6 6 4 1 9Z" fill="#4fd08a"/><path d="M1 8C3 4 8 5 8 8C5 10 7 14 12 14C6 17 0 14 1 8Z" fill="#1458a8"/>',
explorer:'<path d="M0 2H6L8 4H16V14H0Z" fill="#f0b83a"/><path d="M1 6H15V14H1Z" fill="#fbdc7a"/><path d="M3 14V9H13V14H10V12H6V14Z" fill="#3aa0d8"/>',anime:'<path d="M0 0H16V16H0Z" fill="#f1e9de"/><path d="M2 6C4 3 6 6 8 4L7 8 4 9ZM11 4L14 7 12 9 10 7Z" fill="#5a4740"/><path d="M5 0L10 2 7 5Z" fill="#d99a3c"/><path d="M1 14L6 12 9 14 15 12V16H1Z" fill="#222"/>',
word:'<path d="M8 2H16V14H8Z" fill="#e8eefa"/><path d="M10 4H14M10 7H14M10 10H14" stroke="#2a5aa8"/><path d="M0 2L10 0V16L0 14Z" fill="#2a5ab0"/>'+T('W','#fff',5,8,11),pdf:'<rect width="16" height="16" rx="1" fill="#c41820"/>'+T('PDF','#fff',6,5,5)+'<path d="M4 13L12 6 14 8 6 14Z" fill="#fff"/><path d="M9 14L15 9" stroke="#fff"/>',
chev:'wM2 11L8 5 14 11',cam:'wM3 5H11V12H3ZM11 7L14 6V11L11 10M4 2H11M5 14H10',net:'wM4 3H15V11H4ZM8 14H12M10 11V14M1 2H5V7H1Z',mic:'w*M5 1H11V9H5Z;wM3 7V11H13V7M8 11V15',vol:'wM1 6H4L8 2V14L4 10H1ZM10 5A4 4 0 0 1 10 11M12 3A7 7 0 0 1 12 13',
notif:'<path d="M1 1H13V10H7L4 13V10H1Z" fill="#fff"/><path d="M3 4H11M3 6H11" stroke="#332"/><circle cx="11.500" cy="11.500" r="4" fill="#332f2c" stroke="#aaa"/>'+T('4','#fff',11.5,6,14)
};
function draw(name){
  const s=I[name]||'';
  const inner=s[0]==='<'?s:s.split(';').filter(Boolean).map(p=>{
    const c=C[p[0]],f=p[1]==='*';
    return `<path d="${p.slice(f?2:1)}" ${f?`fill="${c}"`:`fill="none" stroke="${c}" stroke-width="1.3"`}/>`;}).join('');
  return `<svg viewBox="0 0 16 16" width="13" height="13" aria-hidden="true">${inner}</svg>`;
}
document.querySelectorAll('.tools').forEach(t=>{
  t.innerHTML=t.dataset.icons.split(' ').map(n=>n==='|'?'<hr>':`<button type="button" aria-label="${n}">${draw(n)}</button>`).join('');
});
document.querySelectorAll('[data-icon]').forEach(e=>{e.innerHTML=draw(e.dataset.icon);});
```
